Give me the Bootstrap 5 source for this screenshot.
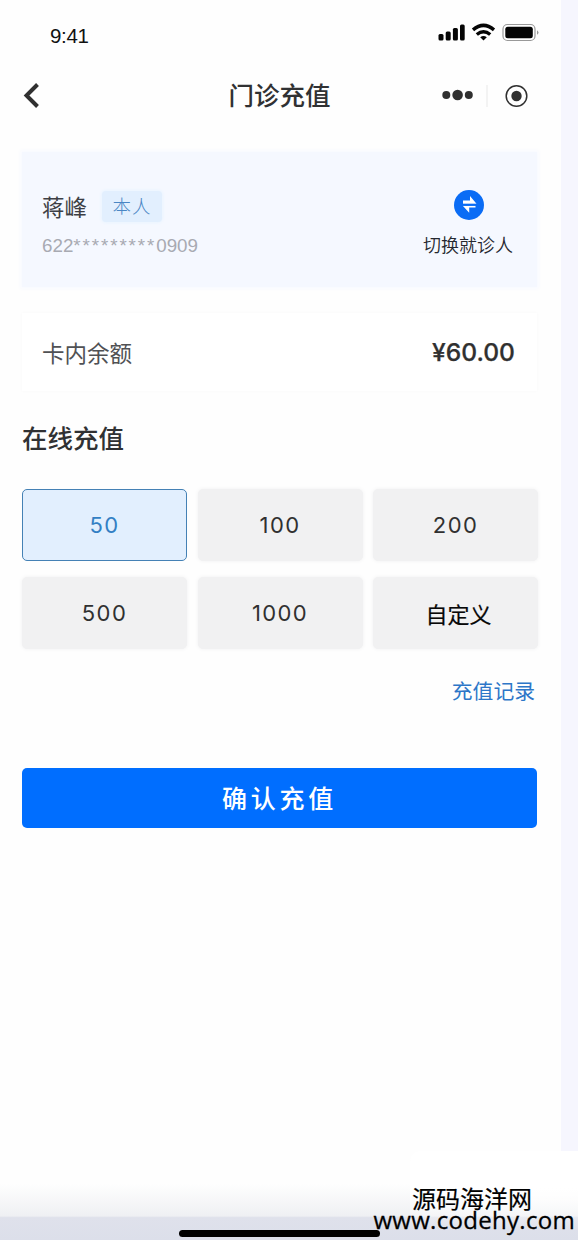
<!DOCTYPE html>
<html lang="zh-CN">
<head>
<meta charset="utf-8">
<meta name="viewport" content="width=device-width, initial-scale=1">
<title>门诊充值</title>
<link href="https://cdn.jsdelivr.net/npm/bootstrap@5.3.0/dist/css/bootstrap.min.css" rel="stylesheet">
<style>
body{font-family:"Liberation Sans","Noto Sans CJK SC",sans-serif;background:#f6f6fe;color:#303133;width:578px;height:1240px;overflow:hidden}
.cjk{font-family:"Noto Sans CJK SC",sans-serif}
.screen{width:561px;height:1240px;background:#fefefe}
.status-bar{height:64px;padding:8px 22px 0 50px}
.clock{font-size:20.5px;color:#111;letter-spacing:-.3px}
.title-bar{height:64px;padding:0 31px 0 22px}
.page-title{font-size:25.5px;font-weight:500;line-height:1;padding:0 0 4px 7px}
.side{width:120px}
.content-col{padding:24px 24px 0 22px}
.patient{height:135px;background:#f5f8ff;padding:7px 24px 0 20px;box-shadow:0 0 4px 2px #f8faff}
.patient-name{font-size:22.5px;line-height:32px;color:#3d3f45}
.tag{width:60px;height:31px;margin-left:15px;background:#e2effe;color:#4a86c4;font-size:18.5px;font-weight:300;letter-spacing:1px;border-radius:4px;box-shadow:0 0 3px 1px #e9f4ff}
.card-no{font-size:18.8px;line-height:28px;color:#a8aab2;margin-top:10px}
.stars{letter-spacing:1.9px}
.switch-label{font-size:18px;font-weight:350;line-height:24px;color:#252830}
.balance{height:78px;padding:2px 22px 0 20px;margin-top:26px;background:#fff;box-shadow:0 0 3px #f9f9f9}
.balance-label{font-size:22.5px;color:#505154}
.amount{font-family:Inter,sans-serif;font-size:24.6px;font-weight:500;color:#303030;padding-bottom:2px;-webkit-text-stroke:.25px #303030}
.section-title{font-size:25.5px;font-weight:500;line-height:36px;margin:28px 0 34px}
.options{display:grid;grid-template-columns:165px 165px 165px;justify-content:space-between;row-gap:16px;margin-right:-1px}
.opt{height:72px;border:1px solid #f1f1f2;background:#f1f1f2;border-radius:5px;font-family:Inter,"Noto Sans CJK SC",sans-serif;font-size:22px;letter-spacing:1.4px;color:#303030;box-shadow:0 0 4px #f1f1f2;padding:0}
.opt.active{background:#e2effe;border-color:#4481b5;color:#337fc4;box-shadow:none}
.opt.custom{color:#080808;letter-spacing:0;font-weight:400;padding:4px 0 0 6px;-webkit-text-stroke:.2px #080808}
.history{font-size:20.8px;line-height:30px;color:#2d76c8;margin-top:26px;margin-right:2px}
.confirm{height:60px;margin-top:63px;background:#006eff;border:0;border-radius:5px;font-size:25px;font-weight:500;letter-spacing:3.8px;color:#fff;padding:0}
.footer-fade{left:0;right:0;bottom:0;height:56px;background:linear-gradient(#fefefe,#eff0f3 57%,#dfe1eb 60%,#dcdfea)}
.home-bar{left:179px;bottom:3px;width:201px;height:7px;background:#000;border-radius:4px}
.wm-glow{left:410px;top:1151px;width:168px;height:80px;background:linear-gradient(#fff 45%,rgba(255,255,255,0));border-radius:10px 0 0 0}
.watermark{right:3px;top:1186px;color:#000}
.wm-name{font-size:24px;line-height:24px;margin-right:43px;-webkit-text-stroke:.2px #000}
.wm-url{font-family:"Open Sans",sans-serif;font-size:24px;line-height:24px;font-weight:500;letter-spacing:.3px;margin-top:-2px;-webkit-text-stroke:.3px #000}
</style>
</head>
<body class="position-relative">
<main class="screen">
  <div class="status-bar d-flex align-items-center justify-content-between">
    <span class="clock">9:41</span>
    <svg width="101" height="20" viewBox="438 22 101 20" style="margin-top:-9px">
      <g fill="#050505"><rect x="438.500" y="34" width="5" height="6.500" rx="1.500"/><rect x="445.700" y="31.500" width="5" height="9" rx="1.500"/><rect x="452.900" y="28" width="5" height="12.500" rx="1.500"/><rect x="460" y="24.500" width="4.700" height="16" rx="1.500"/></g>
      <g fill="none" stroke="#050505" stroke-width="3.500"><path d="M473 29.800Q483.500 21 494 29.800"/><path d="M476.800 34.500Q483.500 29 490.200 34.500"/></g>
      <path d="M480.200 37.300Q483.500 34.800 486.800 37.300L483.500 40.500Z" fill="#050505"/>
      <rect x="503" y="24.500" width="32" height="16" rx="4.500" fill="#fff" stroke="#999" stroke-width="1.200"/><rect x="505.300" y="26.700" width="27.500" height="11.600" rx="2.500" fill="#050505"/><path d="M537 30.200q3 2.300 0 4.600z" fill="#999"/>
    </svg>
  </div>
  <header class="title-bar d-flex align-items-center justify-content-between">
    <div class="side"><svg width="20" height="28" viewBox="0 0 20 28" fill="none" stroke="#303030" stroke-width="4"><path d="M15.500 2.500 4.500 13.500 15.500 24.500"/></svg></div>
    <h1 class="page-title cjk m-0">门诊充值</h1>
    <div class="side d-flex justify-content-end"><svg width="90" height="28" viewBox="440 82 90 28"><g fill="#303030"><circle cx="446.300" cy="95" r="4"/><circle cx="457.600" cy="95" r="5.300"/><circle cx="468.800" cy="95" r="4"/><circle cx="516.500" cy="96" r="5.200"/></g><path d="M487 85v22" stroke="#e8e8e8"/><circle cx="516.500" cy="96" r="10.300" fill="none" stroke="#303030" stroke-width="1.500"/></svg></div>
  </header>
  <div class="content-col d-flex flex-column">
    <section class="patient d-flex align-items-center justify-content-between">
      <div class="pt-1">
        <div class="d-flex align-items-center"><span class="patient-name cjk">蒋峰</span><span class="tag cjk d-flex align-items-center justify-content-center">本人</span></div>
        <div class="card-no">622<span class="stars">*********</span>0909</div>
      </div>
      <div class="d-flex flex-column align-items-center">
        <svg width="30" height="30" viewBox="0 0 30 30" style="margin-left:2px"><circle cx="15" cy="15" r="15" fill="#0a6cf5"/><path d="M9 10.500h7V6l6.500 7.800H9zM21.500 17.500h-6.300v5.300L8.500 15.500h13z" fill="#fff"/><path d="M8 14.900h15" stroke="#0a6cf5" stroke-width="2"/></svg>
        <span class="switch-label cjk mt-2 pt-1">切换就诊人</span>
      </div>
    </section>
    <section class="balance d-flex align-items-center justify-content-between">
      <span class="balance-label cjk">卡内余额</span><span class="amount">¥60.00</span>
    </section>
    <h2 class="section-title cjk">在线充值</h2>
    <div class="options">
      <button class="btn opt active">50</button><button class="btn opt">100</button><button class="btn opt">200</button>
      <button class="btn opt">500</button><button class="btn opt">1000</button><button class="btn opt custom">自定义</button>
    </div>
    <a class="history cjk text-decoration-none align-self-end" href="#">充值记录</a>
    <button class="btn confirm cjk">确认充值</button>
  </div>
</main>
<div class="footer-fade position-absolute"></div>
<div class="wm-glow position-absolute"></div>
<div class="home-bar position-absolute"></div>
<div class="watermark position-absolute text-end"><div class="wm-name cjk">源码海洋网</div><div class="wm-url">www.codehy.com</div></div>
<script src="https://cdn.jsdelivr.net/npm/bootstrap@5.3.0/dist/js/bootstrap.bundle.min.js"></script>
</body>
</html>
